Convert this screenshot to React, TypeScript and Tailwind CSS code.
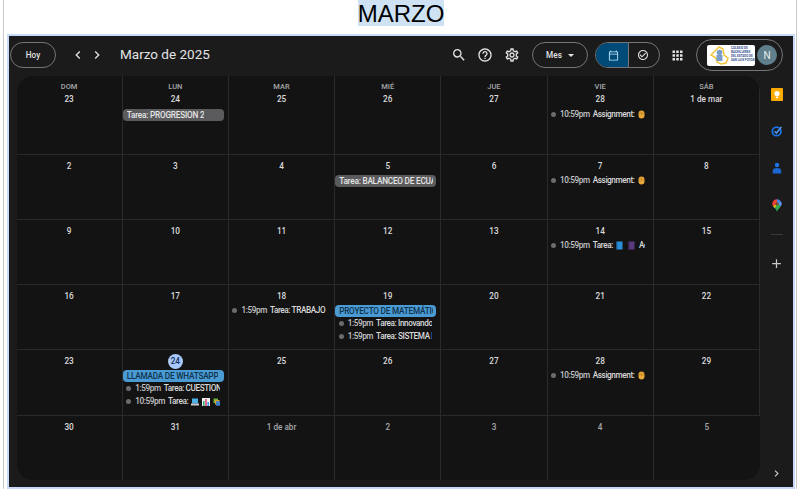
import React from 'react';
import { MdAdd, MdApps, MdCheckCircleOutline, MdChevronLeft, MdChevronRight, MdHelpOutline, MdOutlineCalendarToday, MdOutlineSettings, MdSearch } from 'react-icons/md';

type IconName = 'hand' | 'blueBook' | 'purpleBook' | 'laptop' | 'chart' | 'books';

type CalEvent =
  | { kind: 'chip'; label: string; color: 'gray' | 'blue' }
  | { kind: 'dot'; time: string; label: string; icons?: IconName[]; tail?: string };

type Day = { label: string; dim?: boolean; today?: boolean; events?: CalEvent[] };

const assignment: CalEvent = { kind: 'dot', time: '10:59pm', label: 'Assignment:', icons: ['hand'] };

const weeks: Day[][] = [
  [
    { label: '23' },
    { label: '24', events: [{ kind: 'chip', label: 'Tarea: PROGRESION 2', color: 'gray' }] },
    { label: '25' },
    { label: '26' },
    { label: '27' },
    { label: '28', events: [assignment] },
    { label: '1 de mar' },
  ],
  [
    { label: '2' },
    { label: '3' },
    { label: '4' },
    { label: '5', events: [{ kind: 'chip', label: 'Tarea: BALANCEO DE ECUACIONES', color: 'gray' }] },
    { label: '6' },
    { label: '7', events: [assignment] },
    { label: '8' },
  ],
  [
    { label: '9' },
    { label: '10' },
    { label: '11' },
    { label: '12' },
    { label: '13' },
    { label: '14', events: [{ kind: 'dot', time: '10:59pm', label: 'Tarea:', icons: ['blueBook', 'purpleBook'], tail: 'Actividad' }] },
    { label: '15' },
  ],
  [
    { label: '16' },
    { label: '17' },
    { label: '18', events: [{ kind: 'dot', time: '1:59pm', label: 'Tarea: TRABAJO FINAL' }] },
    {
      label: '19',
      events: [
        { kind: 'chip', label: 'PROYECTO DE MATEMÁTICAS', color: 'blue' },
        { kind: 'dot', time: '1:59pm', label: 'Tarea: Innovando en clase' },
        { kind: 'dot', time: '1:59pm', label: 'Tarea: SISTEMA DE ECUACIONES' },
      ],
    },
    { label: '20' },
    { label: '21' },
    { label: '22' },
  ],
  [
    { label: '23' },
    {
      label: '24',
      today: true,
      events: [
        { kind: 'chip', label: 'LLAMADA DE WHATSAPP', color: 'blue' },
        { kind: 'dot', time: '1:59pm', label: 'Tarea: CUESTIONARIO' },
        { kind: 'dot', time: '10:59pm', label: 'Tarea:', icons: ['laptop', 'chart', 'books'] },
      ],
    },
    { label: '25' },
    { label: '26' },
    { label: '27' },
    { label: '28', events: [assignment] },
    { label: '29' },
  ],
  [
    { label: '30' },
    { label: '31' },
    { label: '1 de abr', dim: true },
    { label: '2', dim: true },
    { label: '3', dim: true },
    { label: '4', dim: true },
    { label: '5', dim: true },
  ],
];

const dayNames = ['DOM', 'LUN', 'MAR', 'MIÉ', 'JUE', 'VIE', 'SÁB'];

// small stand-ins for the emoji in event titles
function EmojiIcon({ name }: { name: IconName }) {
  switch (name) {
    case 'hand':
      return (
        <svg width="7" height="9" viewBox="0 0 7 9" className="ml-[4px] shrink-0">
          <rect x="0.5" y="0.5" width="6" height="8" rx="3" fill="#e8a838" />
          <path d="M2 2v3M3.500 1.500v3.500M5 2v3" stroke="#b97f22" strokeWidth="0.6" />
        </svg>
      );
    case 'blueBook':
      return (
        <svg width="7" height="9" viewBox="0 0 7 9" className="ml-[3px] shrink-0">
          <rect x="0.5" y="0.5" width="6" height="8" fill="#2b8fd6" />
          <rect x="0.5" y="0.5" width="1" height="8" fill="#1a5f96" />
        </svg>
      );
    case 'purpleBook':
      return (
        <svg width="7" height="9" viewBox="0 0 7 9" className="ml-[5px] shrink-0">
          <rect x="0.5" y="0.5" width="6" height="8" fill="#5b3a80" />
          <rect x="0.5" y="0.5" width="1" height="8" fill="#3c2558" />
        </svg>
      );
    case 'laptop':
      return (
        <svg width="8" height="8" viewBox="0 0 8 8" className="ml-[3px] shrink-0">
          <rect x="1" y="0.5" width="6" height="5" fill="#4fb0e8" />
          <rect x="0" y="5.500" width="8" height="2" fill="#c9ccd1" />
        </svg>
      );
    case 'chart':
      return (
        <svg width="8" height="8" viewBox="0 0 8 8" className="ml-[3px] shrink-0">
          <rect width="8" height="8" fill="#eef1f4" />
          <rect x="1" y="3" width="1.600" height="5" fill="#35b56f" />
          <rect x="3.200" y="1" width="1.600" height="7" fill="#e0457b" />
          <rect x="5.400" y="4" width="1.600" height="4" fill="#3b9be0" />
        </svg>
      );
    default:
      return (
        <svg width="8" height="8" viewBox="0 0 8 8" className="ml-[3px] shrink-0">
          <rect x="0.5" y="0.5" width="4.500" height="4.500" fill="#6fb23f" />
          <rect x="2" y="2" width="4.500" height="4.500" fill="#d9a22e" />
          <rect x="3" y="3.200" width="4.500" height="4.500" fill="#3b82c9" />
        </svg>
      );
  }
}

function EventRow({ event }: { event: CalEvent }) {
  if (event.kind === 'chip') {
    return (
      <div
        className={`mr-[4px] mt-[1px] flex h-[12px] items-center overflow-hidden whitespace-nowrap rounded-[4px] pl-[4px] pr-[3px] text-[8.200px] font-medium tracking-[-0.2px] ${
          event.color === 'blue' ? 'bg-[#4a9ad4] text-[#10324c]' : 'bg-[#5b5b5e] text-[#e6e6e6]'
        }`}
      >
        <span className="overflow-hidden">{event.label}</span>
      </div>
    );
  }
  return (
    <div className="mr-[8px] flex h-[13px] items-center overflow-hidden whitespace-nowrap pl-[3.500px] text-[8.200px] font-medium tracking-[-0.4px] text-[#d9d9d9]">
      <span className="mr-[4px] h-[5px] w-[5px] shrink-0 rounded-full bg-[#6b6b6e]" />
      <span className="mr-[3px] shrink-0 text-[#c4c4c4]">{event.time}</span>
      <span className="shrink-0">{event.label}</span>
      {event.icons?.map((name, i) => (
        <EmojiIcon key={i} name={name} />
      ))}
      {event.tail && <span className="ml-[4px]">{event.tail}</span>}
    </div>
  );
}

function DayCell({ day, weekIndex, header }: { day: Day; weekIndex: number; header?: string }) {
  let numberBox = 'mt-[5px] h-[13px]';
  if (header) numberBox = 'mt-[1px] h-[13px]';
  if (day.today) numberBox = 'mt-[4px] h-[15px]';

  return (
    <div className={`min-w-0 overflow-hidden border-r border-[#2a2a2b] last:border-r-0 ${weekIndex > 0 ? 'border-t' : ''}`}>
      {header && <div className="mt-[6px] h-[10px] text-center text-[7.500px] font-medium leading-[10px] text-[#a5a6a8]">{header}</div>}
      <div className={`flex items-center justify-center ${numberBox}`}>
        {day.today ? (
          <span className="flex h-[15px] w-[15px] items-center justify-center rounded-full bg-[#a8c7fa] text-[8.200px] font-medium text-[#14315c]">{day.label}</span>
        ) : (
          <span className={`text-[8.200px] font-medium ${day.dim ? 'text-[#a5a6a8]' : 'text-[#dcdcdc]'}`}>{day.label}</span>
        )}
      </div>
      <div className={`flex flex-col ${header ? 'mt-[2px]' : day.today ? 'mt-0' : 'mt-[1px]'}`}>
        {day.events?.map((e, i) => (
          <EventRow key={i} event={e} />
        ))}
      </div>
    </div>
  );
}

function SideIcons() {
  return (
    <div className="flex w-[33px] shrink-0 flex-col items-center pt-[14px]">
      {/* keep */}
      <svg width="12" height="13" viewBox="0 0 12 13">
        <rect width="12" height="13" rx="1" fill="#f9ab00" />
        <circle cx="6" cy="5.600" r="2.600" fill="#fff" />
        <rect x="4.800" y="8.600" width="2.400" height="1.600" fill="#fff" />
      </svg>
      {/* tasks */}
      <svg width="12" height="12" viewBox="0 0 12 12" className="mt-[24px]">
        <circle cx="5.600" cy="6.400" r="4.300" fill="none" stroke="#1a73e8" strokeWidth="1.800" />
        <path d="M3.600 6.200 5.400 8l5-6" fill="none" stroke="#4d94ee" strokeWidth="1.600" />
      </svg>
      {/* contacts */}
      <svg width="10" height="12" viewBox="0 0 10 12" className="mt-[25px]">
        <circle cx="5" cy="3" r="2.200" fill="#1a73e8" />
        <path d="M0.800 11.500V8.600C0.800 6.800 2.600 6 5 6s4.200.8 4.200 2.600v2.900z" fill="#1a66d0" />
      </svg>
      {/* maps */}
      <svg width="10" height="13" viewBox="0 0 10 13" className="mt-[25px]">
        <path d="M5 0.300C2.300 0.300 0.300 2.300 0.300 4.800c0 1 .3 1.800.8 2.600L5 4.800z" fill="#ea4335" />
        <path d="M5 0.300c1.400 0 2.700.6 3.500 1.600L5 4.800z" fill="#4285f4" />
        <path d="M8.500 1.900c.8.8 1.200 1.800 1.200 2.900 0 .9-.3 1.700-.8 2.500L5 4.800z" fill="#5e97f6" />
        <path d="M1.100 7.400 5 4.800l3.900 2.500C7.500 9.300 5.600 10.600 5 12.800 4.700 11.600 4 10.500 3.200 9.500z" fill="#34a853" />
        <path d="M1.100 7.400 5 4.800 2.800 8.900z" fill="#fbbc04" />
        <circle cx="5" cy="4.700" r="1.500" fill="#7b4a1e" />
      </svg>
      <div className="mt-[22px] h-px w-[12px] bg-[#3a3a3b]" />
      <MdAdd size={15} className="mt-[21px] text-[#c9c9c9]" />
      <MdChevronRight size={13} className="mb-[7px] mt-auto text-[#d0d0d0]" />
    </div>
  );
}

function SchoolLogo() {
  return (
    <div className="flex h-[21px] w-[48px] items-center gap-[2px] rounded-[2px] bg-white pl-[3px]">
      <svg width="19" height="19" viewBox="0 0 19 19" className="shrink-0">
        <path d="M1 9 6 4l3-3 4 2 1 6 4 3-2 5-5 1-4-2-1-4z" fill="none" stroke="#f2c53d" strokeWidth="1.500" />
        <circle cx="9.500" cy="6.500" r="2.800" fill="#7c9cc9" />
        <rect x="6.500" y="9" width="6" height="6" fill="#7c9cc9" />
      </svg>
      <div className="whitespace-nowrap text-[3px] font-bold leading-[3.900px] text-[#2f4f8f]">
        COLEGIO DE
        <br />
        BACHILLERES
        <br />
        DEL ESTADO DE
        <br />
        SAN LUIS POTOSÍ
      </div>
    </div>
  );
}

export default function App() {
  return (
    <div className="h-[489px] w-[800px] overflow-hidden bg-white font-['Liberation_Sans',sans-serif]">
      <div className="mx-[3px] flex h-full flex-col border-x border-[#c8c8c8]">
        <div className="flex h-[26px] justify-center pl-[2px]">
          <span className="bg-[#cfe2f3] text-[24px] leading-[27px] text-black">MARZO</span>
        </div>
        <div className="ml-[3px] mr-[1px] mt-[8px] flex h-[455px] flex-col border-2 border-[#c9daf8] bg-[#1b1b1c] font-['Roboto',sans-serif]">
          {/* toolbar */}
          <div className="flex h-[38px] shrink-0 items-center pl-[1px] pr-[10px] text-[#e3e3e3]">
            <button className="h-[26px] w-[46px] rounded-full border border-[#747578] text-[8.200px] font-medium">Hoy</button>
            <MdChevronLeft size={16} className="ml-[14px]" />
            <MdChevronRight size={16} className="ml-[3px]" />
            <span className="ml-[15px] text-[13.500px] leading-none">Marzo de 2025</span>
            <MdSearch size={16} className="ml-auto" />
            <MdHelpOutline size={16} className="ml-[10px]" />
            <MdOutlineSettings size={16} className="ml-[11px]" />
            <button className="ml-[12px] flex h-[26px] w-[56px] items-center justify-center gap-[6px] rounded-full border border-[#747578] text-[8.200px] font-medium">
              Mes
              <span className="h-0 w-0 border-x-[3px] border-t-[3px] border-x-transparent border-t-[#e3e3e3]" />
            </button>
            <div className="ml-[7px] flex h-[26px] w-[65px] overflow-hidden rounded-full border border-[#747578]">
              <div className="flex w-[32px] items-center justify-center bg-[#004a77] pl-[2px] text-[#c2e7ff]">
                <MdOutlineCalendarToday size={11} />
              </div>
              <div className="flex flex-1 items-center justify-center border-l border-[#747578] pr-[2px]">
                <MdCheckCircleOutline size={12} />
              </div>
            </div>
            <MdApps size={15} className="ml-[10px]" />
            <div className="ml-[11px] flex h-[32px] w-[87px] items-center justify-between rounded-full border border-[#747578] pl-[10px] pr-[5px]">
              <SchoolLogo />
              <span className="flex h-[20px] w-[20px] items-center justify-center rounded-full bg-[#5f7f8c] text-[10px] text-[#e8eef0]">N</span>
            </div>
          </div>
          <div className="flex min-h-0 flex-1">
            {/* month grid */}
            <div className="mb-[7px] ml-[7.500px] mt-[2px] grid flex-1 grid-cols-7 grid-rows-[78px_65px_65px_65px_66px_65px] overflow-hidden rounded-[16px] bg-[#131314]">
              {weeks.map((week, w) =>
                week.map((day, d) => <DayCell key={`${w}-${d}`} day={day} weekIndex={w} header={w === 0 ? dayNames[d] : undefined} />),
              )}
            </div>
            <SideIcons />
          </div>
        </div>
      </div>
    </div>
  );
}
